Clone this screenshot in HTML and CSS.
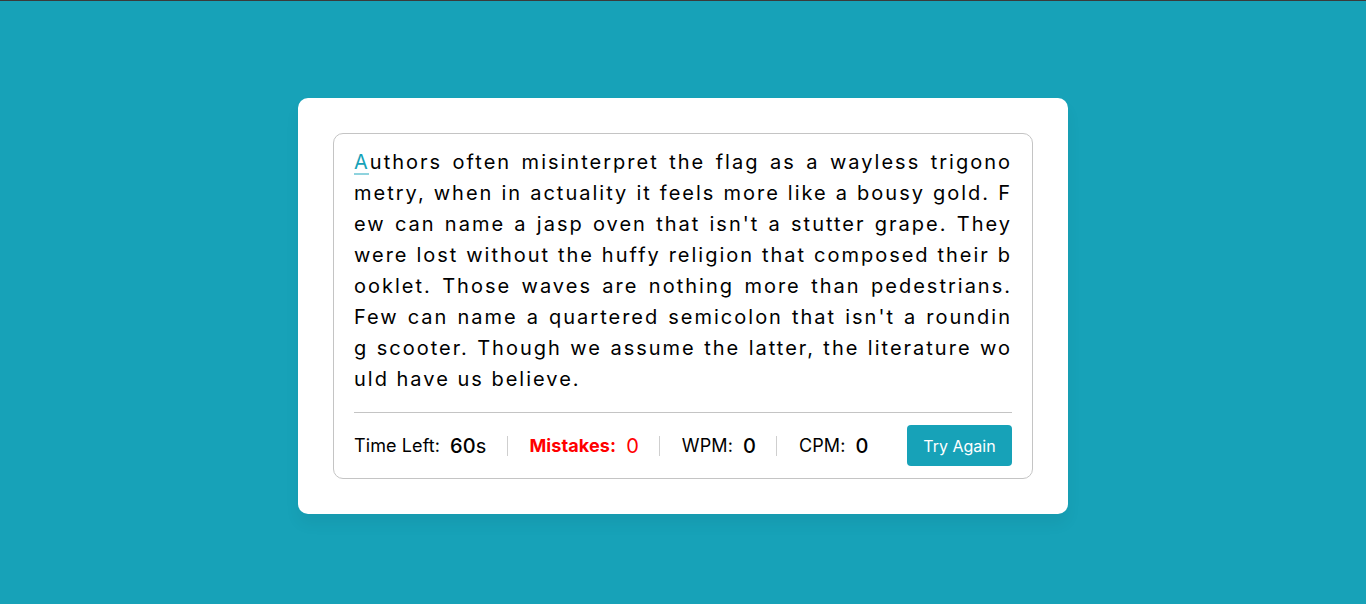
FILE: index.html
```html
<!DOCTYPE html>
<html lang="en">
<head>
<meta charset="utf-8">
<title>Typing Test</title>
<link rel="stylesheet" href="styles.css">
</head>
<body>
<div class="page">
  <div class="wrapper">
    <div class="content-box">
      <div class="typing-text">
        <span class="line"><span class="active">A</span>uthors often misinterpret the flag as a wayless trigono</span>
        <span class="line">metry, when in actuality it feels more like a bousy gold. F</span>
        <span class="line">ew can name a jasp oven that isn't a stutter grape. They</span>
        <span class="line">were lost without the huffy religion that composed their b</span>
        <span class="line">ooklet. Those waves are nothing more than pedestrians.</span>
        <span class="line">Few can name a quartered semicolon that isn't a roundin</span>
        <span class="line">g scooter. Though we assume the latter, the literature wo</span>
        <span class="line last">uld have us believe.</span>
      </div>
      <div class="content">
        <ul class="result-details">
          <li class="time"><span class="label">Time Left:</span><span class="value">60</span><span class="unit">s</span></li>
          <li class="mistake"><span class="label">Mistakes:</span><span class="value">0</span></li>
          <li class="wpm"><span class="label">WPM:</span><span class="value">0</span></li>
          <li class="cpm"><span class="label">CPM:</span><span class="value">0</span></li>
        </ul>
        <button class="try-btn">Try Again</button>
      </div>
    </div>
  </div>
</div>
</body>
</html>
```
FILE: styles.css
```css
* {
  margin: 0;
  padding: 0;
  box-sizing: border-box;
}
html, body {
  height: 100%;
}
body {
  background: #17a2b8;
  border-top: 1px solid #3b3b3b;
  font-family: "Inter", "Liberation Sans", sans-serif;
}
.page {
  min-height: 603px;
  padding-top: 7px;
  display: flex;
  align-items: center;
  justify-content: center;
}
.wrapper {
  width: 770px;
  background: #fff;
  border-radius: 10px;
  padding: 35px;
  box-shadow: 0 10px 15px rgba(0, 0, 0, 0.05);
}
.content-box {
  border: 1px solid #c4c4c4;
  border-radius: 10px;
  padding: 13px 20px 12px;
}
.typing-text {
  font-size: 20px;
  line-height: 31px;
  letter-spacing: 2px;
  color: #000;
}
.typing-text .line {
  display: block;
  text-align: justify;
  text-align-last: justify;
}
.typing-text .line.last {
  text-align-last: left;
}
.typing-text .active {
  color: #17a2b8;
  position: relative;
}
.typing-text .active::before {
  content: "";
  position: absolute;
  left: 0;
  right: 1px;
  bottom: -1px;
  height: 2px;
  background: #8fd3de;
}
.content {
  margin-top: 17px;
  border-top: 1px solid #c4c4c4;
  padding-top: 12px;
  display: flex;
  align-items: center;
  justify-content: space-between;
}
.result-details {
  list-style: none;
  display: flex;
  align-items: center;
}
.result-details li {
  display: flex;
  height: 20px;
  align-items: center;
  padding: 0 20px 0 22px;
  border-left: 1px solid #cfcfcf;
  font-size: 18px;
  letter-spacing: 0.1px;
  color: #000;
}
.result-details li:first-child {
  padding-left: 0;
  border-left: 0;
}
.result-details .label {
  margin-right: 10px;
}
.result-details .value {
  font-size: 20px;
  font-weight: 500;
}
.result-details .unit {
  font-size: 20px;
}
.result-details .mistake {
  color: #ff0000;
}
.result-details .mistake .label {
  font-weight: 700;
}
.result-details .mistake .value {
  font-weight: 400;
}
.try-btn {
  width: 105px;
  height: 41px;
  border: none;
  border-radius: 4px;
  background: #17a2b8;
  color: #fff;
  font-family: inherit;
  font-size: 16px;
  cursor: pointer;
}
```
